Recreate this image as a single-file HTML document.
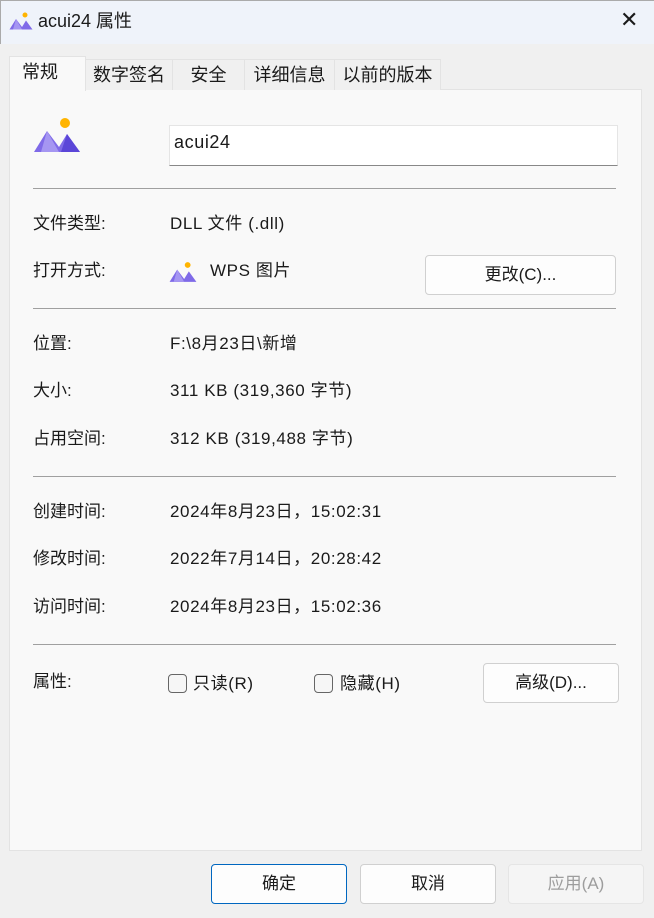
<!DOCTYPE html>
<html><head><meta charset="utf-8"><style>
*{margin:0;padding:0;box-sizing:border-box}
body{width:654px;height:918px;background:#f0f0f0;font-family:"Liberation Sans","Noto Sans CJK SC",sans-serif;font-size:17px;color:#1a1a1a;position:relative;overflow:hidden}
.a{position:absolute;white-space:nowrap;line-height:20px}
.v{letter-spacing:0.6px}
.title{left:0;top:0;width:654px;height:44px;background:#eff3fa;border-top:1px solid #aaa;border-left:1px solid #aaa}
.panel{left:9px;top:89px;width:633px;height:762px;background:#f9f9f9;border:1px solid #e3e3e3}
.tab{top:59px;height:31px;background:#f0f0f0;border:1px solid #e3e3e3;border-bottom:none;padding-top:5px;text-align:center;font-size:18px}
.sep{left:33px;width:583px;height:1px;background:#a0a0a0}
.btn{background:#fdfdfd;border:1px solid #d0d0d0;border-radius:4px;text-align:center;font-size:17px;line-height:37px}
.cb{width:19px;height:19px;border:1px solid #666;border-radius:4px;background:#f6f6f6}
</style></head><body>
<div class="a title"></div>
<svg class="a" style="left:9px;top:11px" width="24" height="20" viewBox="0 0 48 36"><circle cx="32" cy="6" r="5" fill="#ffb400"/><path d="M1 35 L14 14 L26 30 L34 17 L47 35 Z" fill="#7f6ae8"/><path d="M14 14 L26 35 L8 35 Z" fill="#a596f2"/></svg>
<div class="a" style="left:38px;top:11px;font-size:18px">acui24 属性</div>
<div class="a" style="left:620px;top:10px;font-size:22px;font-weight:300">✕</div>
<div class="a panel"></div>
<div class="a tab" style="left:85px;width:88px">数字签名</div>
<div class="a tab" style="left:172px;width:73px">安全</div>
<div class="a tab" style="left:244px;width:91px">详细信息</div>
<div class="a tab" style="left:334px;width:107px">以前的版本</div>
<div class="a tab" style="left:9px;top:56px;height:35px;width:77px;background:#f9f9f9;text-align:left;padding-left:12px">常规</div>
<svg class="a" style="left:33px;top:117px" width="48" height="36" viewBox="0 0 48 36"><circle cx="32" cy="6" r="5" fill="#ffb400"/><path d="M1 35 L14 14 L26 30 L34 17 L47 35 Z" fill="#7f6ae8"/><path d="M14 14 L26 35 L8 35 Z" fill="#a596f2"/><path d="M34 17 L47 35 L28 35 Z" fill="#5b46d8"/></svg>
<div class="a v" style="left:169px;top:125px;width:449px;height:41px;background:#fff;border:1px solid #e5e5e5;border-bottom:1px solid #888;padding:6px 0 0 4px;font-size:18px">acui24</div>
<div class="a sep" style="top:188px"></div>
<div class="a" style="left:33px;top:214px">文件类型:</div><div class="a v" style="left:170px;top:214px">DLL 文件 (.dll)</div>
<div class="a" style="left:33px;top:261px">打开方式:</div>
<svg class="a" style="left:169px;top:261px" width="28" height="22" viewBox="0 0 48 36"><circle cx="32" cy="6" r="5" fill="#ffb400"/><path d="M1 35 L14 14 L26 30 L34 17 L47 35 Z" fill="#7f6ae8"/><path d="M14 14 L26 35 L8 35 Z" fill="#a596f2"/></svg>
<div class="a v" style="left:210px;top:261px">WPS 图片</div>
<div class="a btn" style="left:425px;top:255px;width:191px;height:40px">更改(C)...</div>
<div class="a sep" style="top:308px"></div>
<div class="a" style="left:33px;top:334px">位置:</div><div class="a v" style="left:170px;top:334px">F:\8月23日\新增</div>
<div class="a" style="left:33px;top:381px">大小:</div><div class="a v" style="left:170px;top:381px">311 KB (319,360 字节)</div>
<div class="a" style="left:33px;top:429px">占用空间:</div><div class="a v" style="left:170px;top:429px">312 KB (319,488 字节)</div>
<div class="a sep" style="top:476px"></div>
<div class="a" style="left:33px;top:502px">创建时间:</div><div class="a v" style="left:170px;top:502px">2024年8月23日，15:02:31</div>
<div class="a" style="left:33px;top:549px">修改时间:</div><div class="a v" style="left:170px;top:549px">2022年7月14日，20:28:42</div>
<div class="a" style="left:33px;top:597px">访问时间:</div><div class="a v" style="left:170px;top:597px">2024年8月23日，15:02:36</div>
<div class="a sep" style="top:644px"></div>
<div class="a" style="left:33px;top:672px">属性:</div>
<div class="a cb" style="left:168px;top:674px"></div><div class="a v" style="left:193px;top:674px">只读(R)</div>
<div class="a cb" style="left:314px;top:674px"></div><div class="a v" style="left:340px;top:674px">隐藏(H)</div>
<div class="a btn" style="left:483px;top:663px;width:136px;height:40px">高级(D)...</div>
<div class="a btn" style="left:211px;top:864px;width:136px;height:40px;border:1px solid #0067c0">确定</div>
<div class="a btn" style="left:360px;top:864px;width:136px;height:40px">取消</div>
<div class="a btn" style="left:508px;top:864px;width:136px;height:40px;background:#f5f5f5;border-color:#e5e5e5;color:#9d9d9d">应用(A)</div>
</body></html>
